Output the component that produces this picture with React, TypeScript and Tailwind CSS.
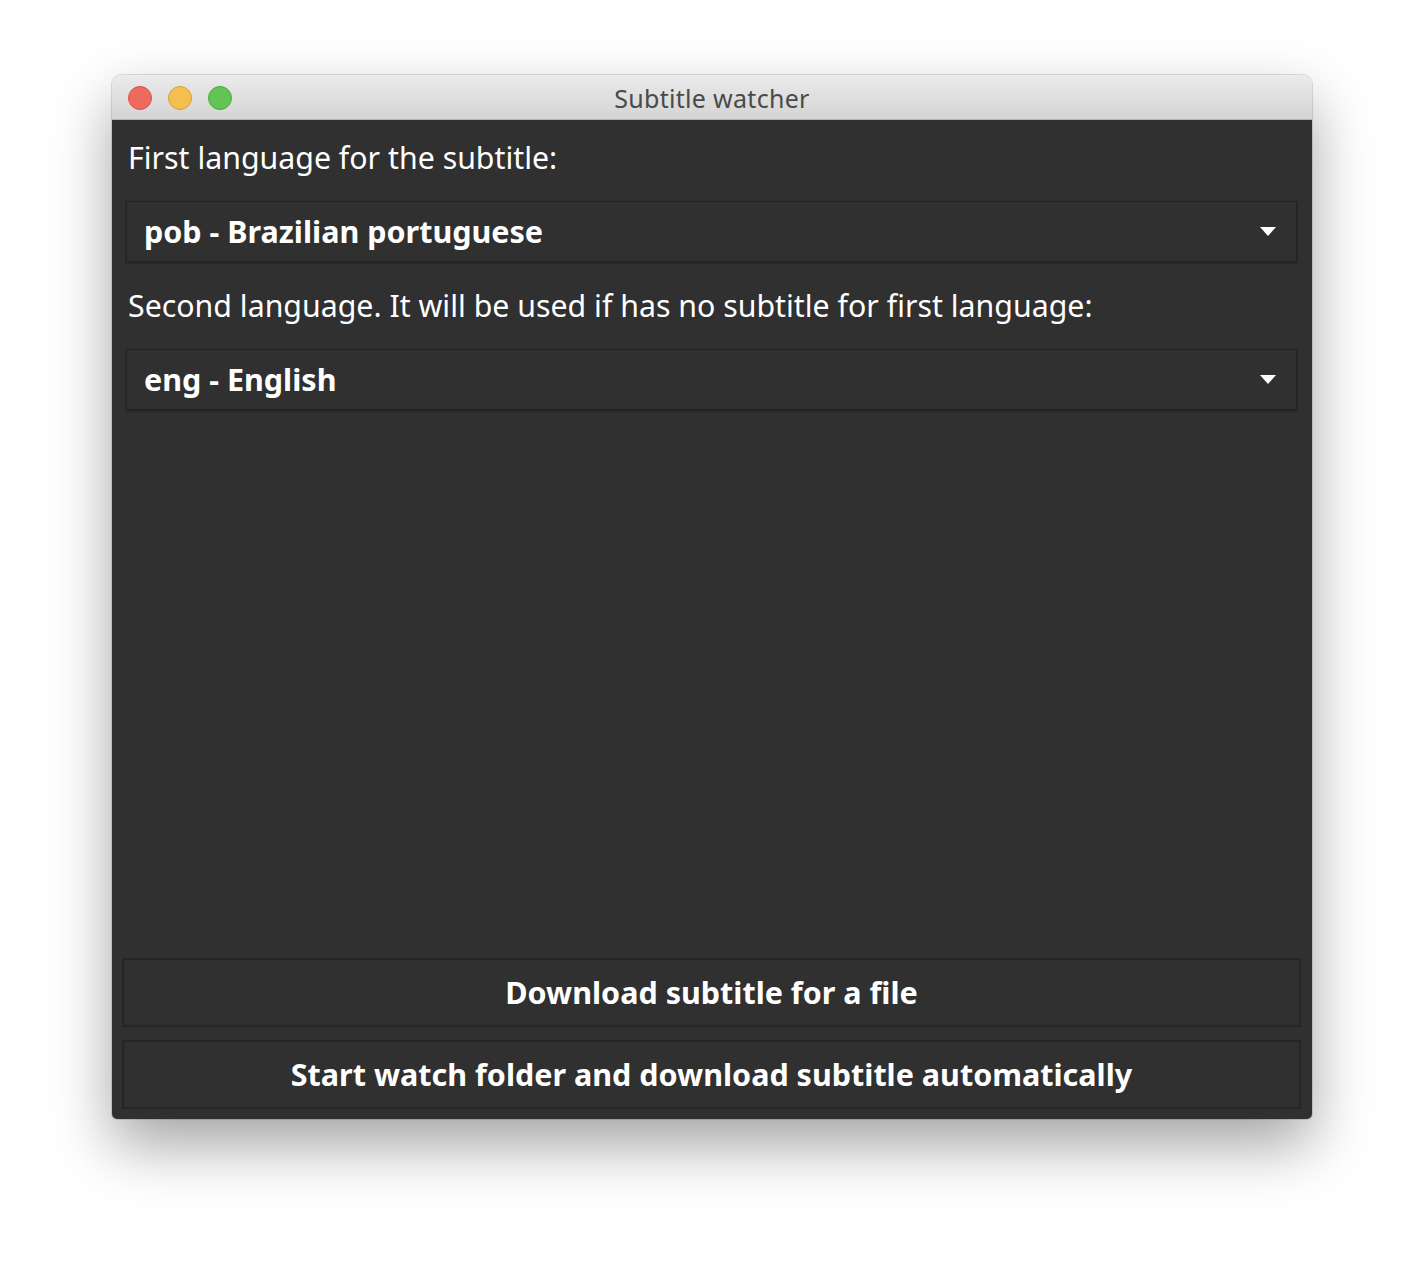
import React from 'react'

function Caret() {
  return (
    <svg width="16" height="9" viewBox="0 0 16 9" className="shrink-0">
      <path d="M0 0 H16 L8 9 Z" fill="#ffffff" />
    </svg>
  )
}

function Combo({ value }: { value: string }) {
  return (
    <div className="mx-[14px] mr-[15px] h-[61px] flex items-center justify-between pl-[17px] pr-[20px] bg-[#303030] border border-[#222222] shadow-[0_1px_2px_rgba(0,0,0,0.35)]">
      <span className="text-[30.5px] font-bold text-white leading-none">{value}</span>
      <Caret />
    </div>
  )
}

function WideButton({ label }: { label: string }) {
  return (
    <button className="mx-[10px] mr-[11px] h-[69px] flex items-center justify-center bg-[#303030] border-2 border-[#262626] shadow-[inset_0_0_1px_rgba(0,0,0,0.4)] text-[30.5px] font-bold text-white">
      {label}
    </button>
  )
}

export default function App() {
  return (
    <div className="min-h-[1268px] bg-white flex justify-center pt-[75px] font-['Noto_Sans','Open_Sans',sans-serif]">
      <div className="w-[1200px] h-[1044px] flex flex-col rounded-t-[10px] rounded-b-[5px] overflow-hidden shadow-[0_26px_60px_rgba(0,0,0,0.36),0_0_0_1px_rgba(0,0,0,0.12)]">
        <div className="h-[45px] shrink-0 relative flex items-center justify-center bg-gradient-to-b from-[#ebebeb] to-[#d4d4d4] border-b border-[#b4b4b4]">
          <div className="absolute left-[16px] top-[11px] flex gap-[16px]">
            <span className="w-[24px] h-[24px] rounded-full bg-[#ee6a5f] border border-[#d25449]" />
            <span className="w-[24px] h-[24px] rounded-full bg-[#f5bf4f] border border-[#d6a13b]" />
            <span className="w-[24px] h-[24px] rounded-full bg-[#61c454] border border-[#4ca83f]" />
          </div>
          <span className="text-[25px] text-[#4a4a4a] leading-none tracking-[0.3px] translate-y-[1px]">Subtitle watcher</span>
        </div>
        <div className="flex-1 flex flex-col bg-[#303030] pb-[10px]">
          <p className="pl-[16px] pt-[17px] text-[30.3px] leading-[42px] text-white">First language for the subtitle:</p>
          <div className="mt-[22px]">
            <Combo value="pob - Brazilian portuguese" />
          </div>
          <p className="pl-[16px] mt-[23px] text-[30.3px] leading-[42px] text-white">
            Second language. It will be used if has no subtitle for first language:
          </p>
          <div className="mt-[22px]">
            <Combo value="eng - English" />
          </div>
          <div className="flex-1" />
          <div className="flex flex-col gap-[13px]">
            <WideButton label="Download subtitle for a file" />
            <WideButton label="Start watch folder and download subtitle automatically" />
          </div>
        </div>
      </div>
    </div>
  )
}
